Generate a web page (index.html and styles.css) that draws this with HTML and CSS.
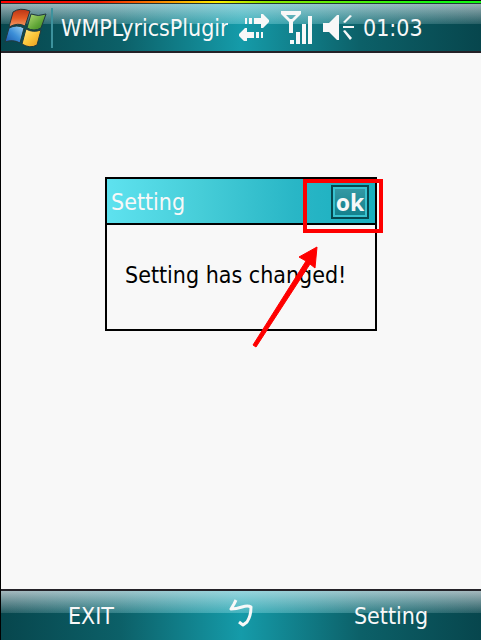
FILE: index.html
```html
<!DOCTYPE html>
<html lang="en">
<head>
<meta charset="utf-8">
<title>WMPLyricsPlugin</title>
<link rel="stylesheet" href="styles.css">
</head>
<body>
<header class="topbar">
  <button class="start" aria-label="Start">
    <svg width="44" height="40" viewBox="0 0 44 40">
      <defs>
        <linearGradient id="r" x1="0" y1="0" x2="0" y2="1"><stop offset="0" stop-color="#b93416"/><stop offset=".5" stop-color="#e35a24"/><stop offset="1" stop-color="#f3a06c"/></linearGradient>
        <linearGradient id="g" x1="0" y1="0" x2="1" y2="1"><stop offset="0" stop-color="#b5dc78"/><stop offset=".6" stop-color="#5fa536"/><stop offset="1" stop-color="#347f24"/></linearGradient>
        <linearGradient id="b" x1="0" y1="1" x2="1" y2="0"><stop offset="0" stop-color="#1853a8"/><stop offset=".5" stop-color="#3c8fd8"/><stop offset="1" stop-color="#a5d9f5"/></linearGradient>
        <linearGradient id="y" x1="0" y1="0" x2="1" y2="1"><stop offset="0" stop-color="#ffe98a"/><stop offset=".5" stop-color="#fbc63a"/><stop offset="1" stop-color="#e5951c"/></linearGradient>
      </defs>
      <g stroke="#20383c" stroke-width="1">
        <path fill="url(#r)" d="M9 4Q16 -1 26 3L21 18Q14 14 5 19Z"/>
        <path fill="url(#g)" d="M27 6Q34 9 42 6L37 20Q30 24 23 20Z"/>
        <path fill="url(#b)" d="M5 20Q13 16 20 20L16 35Q9 31 1 34Z"/>
        <path fill="url(#y)" d="M22 21Q29 25 37 22L33 37Q26 41 18 36Z"/>
      </g>
    </svg>
  </button>
  <h1 class="app-title">WMPLyricsPlugin</h1>
  <div class="status">
    <svg width="30" height="27" viewBox="0 0 30 27" fill="#f8f8f8" aria-hidden="true">
      <path d="M6 4h2v6H6zM10 4h3v6h-3zM15 4h7V0h2l6 6v2l-6 6h-2v-4h-7zM24 18h-2v6h2zM20 18h-3v6h3zM15 18H8v-4H6l-6 6v2l6 6h2v-4h7z"/>
    </svg>
    <svg class="signal" width="32" height="33" viewBox="0 0 32 33" fill="#f8f8f8" aria-hidden="true">
      <path fill-rule="evenodd" d="M0 0h20v3l-8 8v11H8V11L0 3zM5 4l4 4h2l4-4z"/>
      <path d="M9 29h4v4H9zM15 21h4v12h-4zM21 13h4v20h-4zM27 5h4v28h-4z"/>
    </svg>
    <svg class="speaker" width="31" height="25" viewBox="0 0 31 25" fill="#f8f8f8" aria-hidden="true">
      <path d="M0 8h6l8-8h2v25h-2l-8-8H0z"/>
      <path d="M20 7l7-7 2 1-7 7zM20 11h11v2H20zM20 16l2-1 7 8-2 2z"/>
    </svg>
    <time class="clock">01:03</time>
  </div>
</header>

<main class="screen">
  <section class="dialog" role="dialog" aria-labelledby="dialog-title">
    <div class="dialog-head">
      <h2 id="dialog-title">Setting</h2>
      <button class="ok">ok</button>
    </div>
    <p class="dialog-body">Setting has changed!</p>
    <div class="highlight"></div>
    <svg class="arrow" width="70" height="104" viewBox="0 0 70 104" fill="#fe0000" aria-hidden="true">
      <path d="M65 1L63 22L58 18L4 101L1 99L54 15L47 11Z" stroke="#fe0000"/>
    </svg>
  </section>
</main>

<footer class="softkeys">
  <button class="softkey">EXIT</button>
  <button class="input-mode" aria-label="Input mode">
    <svg width="24" height="28" viewBox="0 0 24 28" fill="none" stroke="#f8f8f8" stroke-width="3" stroke-linejoin="round" aria-hidden="true">
      <path d="M7 1L5 5L2 10Q7 10 13 8Q19 6 22 8Q22 17 18 23L14 26L10 23"/>
    </svg>
  </button>
  <button class="softkey">Setting</button>
</footer>
</body>
</html>
```
FILE: styles.css
```css
*, *::before { box-sizing: border-box; }

body {
  margin: 0;
  min-height: 100vh;
  display: flex;
  flex-direction: column;
  border-left: 1px solid #000;
  background: #f8f8f8;
  color: #000;
  font: 23px/28px "DejaVu Sans Condensed", "Noto Sans", sans-serif;
}

h1, h2, p { margin: 0; font: inherit; }

button {
  padding: 0;
  border: 0;
  background: none;
  color: inherit;
  font: inherit;
}

svg { display: block; flex: none; }

.topbar, .softkeys {
  color: #f8f8f8;
  background:
    linear-gradient(90deg, transparent, rgba(110, 225, 235, .3) 50%, transparent) 0 0 / 100% 22px no-repeat,
    linear-gradient(rgba(226, 228, 232, .72), rgba(160, 185, 188, .2)) 0 0 / 100% 22px no-repeat,
    linear-gradient(90deg, #07464d, #0c6068 25%, #159ba9 50%, #0c6068 75%, #07464d);
}

.topbar {
  position: relative;
  display: flex;
  align-items: center;
  height: 53px;
  padding: 4px 0 0 3px;
  border-bottom: 2px solid #242228;
  background-position: 0 2px, 0 2px, 0 0;
}

.topbar::before {
  content: "";
  position: absolute;
  inset: 0 0 auto;
  height: 4px;
  border-top: 1px solid #000;
  border-bottom: 1px solid #233838;
  background: linear-gradient(90deg, #f00, #f41800 20%, #ffef00 45%, #8fe800 55%, #14f814 90%);
}

.start {
  padding-right: 3px;
  border-right: 2px solid #3d929d;
}

.app-title {
  width: 167px;
  margin-left: 8px;
  overflow: hidden;
  white-space: nowrap;
}

.status {
  display: flex;
  align-items: center;
  gap: 12px;
  margin-left: 11px;
}

.signal { margin-right: -2px; }
.speaker { margin-right: -3px; }

.screen {
  flex: 1;
  padding-top: 124px;
}

.dialog {
  position: relative;
  width: 272px;
  margin: 0 auto;
  border: 2px solid #000;
}

.dialog-head {
  display: flex;
  align-items: center;
  justify-content: space-between;
  height: 46px;
  padding: 2px 6px 0 4px;
  border-bottom: 2px solid #000;
  background: linear-gradient(90deg, #5ee2ef, #46cdd8 35%, #29b6c6 70%, #19afbf);
  color: #f8f8f8;
}

.ok {
  width: 38px;
  height: 34px;
  border: 2px solid #06474f;
  background: linear-gradient(#359aa5, #12808b);
  box-shadow: inset 0 0 0 2px #38c2cf;
  font: bold 23px/28px "Noto Sans", sans-serif;
}

.dialog-body {
  padding: 36px 0 40px 18px;
  white-space: nowrap;
}

.highlight {
  position: absolute;
  top: 0;
  right: -8px;
  width: 80px;
  height: 54px;
  border: 4px solid #fe0000;
}

.arrow {
  position: absolute;
  top: 67px;
  left: 145px;
}

.softkeys {
  display: grid;
  grid-template-columns: 1fr 60px 1fr;
  align-items: center;
  height: 51px;
  border-top: 2px solid #242228;
}

.softkey:first-child { padding-right: 30px; }
.softkey:last-child { padding-left: 30px; }

.input-mode {
  display: flex;
  justify-content: center;
  align-self: start;
  padding-top: 8px;
}
```
